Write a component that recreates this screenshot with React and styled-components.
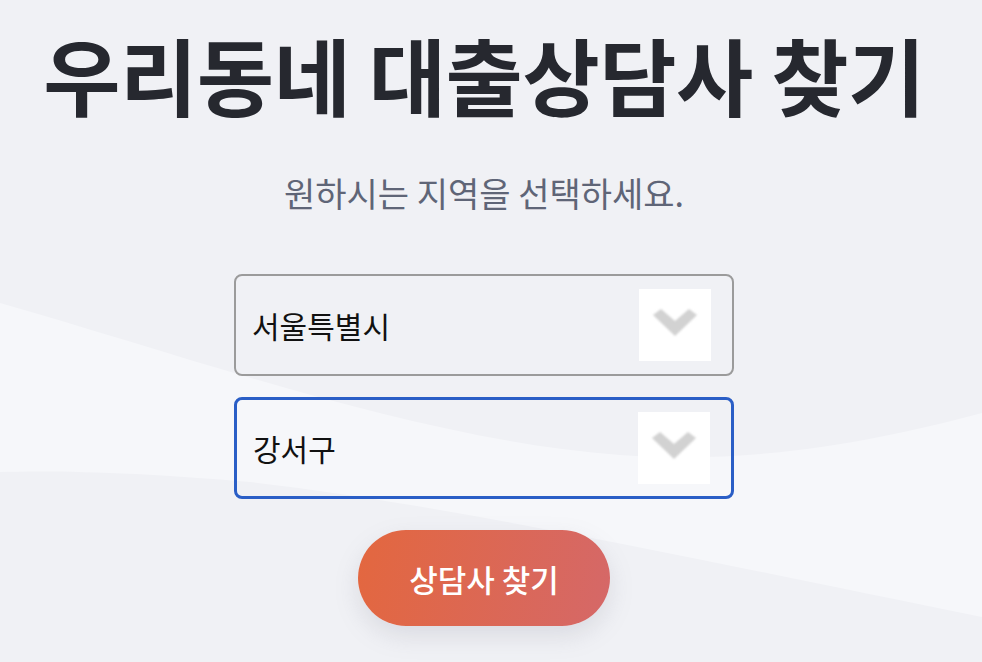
import React, { useState } from 'react';
import styled, { createGlobalStyle } from 'styled-components';

const GlobalStyle = createGlobalStyle`
  html, body {
    margin: 0;
    padding: 0;
    background: #f0f1f5;
  }
  body {
    font-family: "Noto Sans CJK KR", "Noto Sans", sans-serif;
  }
`;

const seoulGu = ['강남구', '강동구', '강북구', '강서구', '관악구', '광진구', '구로구', '금천구', '노원구', '도봉구'];

const Chevron = () => (
  <svg width="72" height="72" viewBox="0 0 72 72">
    <polygon
      points="14,26 22,20 36,32 50,20 58,26 36,47"
      fill="#d2d2d2"
      style={{ filter: 'blur(1.3px)' }}
    />
  </svg>
);

const Background = () => (
  <Waves viewBox="0 0 982 662" preserveAspectRatio="none">
    <path
      d="M0,303 C200,360 420,440 620,455 C760,465 880,440 982,413 L982,617 C700,560 450,505 250,482 C150,473 60,470 0,472 Z"
      fill="#f6f7fa"
    />
  </Waves>
);

const App = () => {
  const [city, setCity] = useState('서울특별시');
  const [gu, setGu] = useState('강서구');

  return (
    <>
      <GlobalStyle />
      <Page>
        <Background />
        <Content>
          <Titulo>우리동네 대출상담사 찾기</Titulo>
          <Subtitulo>원하시는 지역을 선택하세요.</Subtitulo>
          <Form>
            <SelectBox>
              <Select value={city} onChange={(e) => setCity(e.target.value)}>
                <option>서울특별시</option>
                <option>부산광역시</option>
                <option>경기도</option>
              </Select>
              <ArrowBox>
                <Chevron />
              </ArrowBox>
            </SelectBox>
            <SelectBox active>
              <Select value={gu} onChange={(e) => setGu(e.target.value)}>
                {seoulGu.map((g) => (
                  <option key={g}>{g}</option>
                ))}
              </Select>
              <ArrowBox>
                <Chevron />
              </ArrowBox>
            </SelectBox>
            <Boton type="button">상담사 찾기</Boton>
          </Form>
        </Content>
      </Page>
    </>
  );
};

export default App;

const Page = styled.div`
  position: relative;
  width: 100%;
  min-height: 662px;
  overflow: hidden;
  background: #f0f1f5;
`;

const Waves = styled.svg`
  position: absolute;
  top: 0;
  left: 0;
  width: 100%;
  height: 662px;
  z-index: 0;
`;

const Content = styled.div`
  position: relative;
  z-index: 1;
  display: flex;
  flex-direction: column;
  align-items: center;
  padding: 19px 14px 0 0;
`;

const Titulo = styled.h1`
  margin: 0;
  font-size: 84px;
  font-weight: 700;
  line-height: 110px;
  color: #26282f;
  letter-spacing: -0.5px;
  white-space: nowrap;
  text-align: center;
`;

const Subtitulo = styled.p`
  margin: 44px 0 0;
  font-size: 34px;
  font-weight: 400;
  line-height: 40px;
  color: #5f6577;
  text-align: center;
`;

const Form = styled.div`
  display: flex;
  flex-direction: column;
  align-items: center;
  gap: 21px;
  margin-top: 61px;
`;

const SelectBox = styled.div`
  box-sizing: border-box;
  width: 500px;
  height: 102px;
  display: flex;
  align-items: center;
  padding: 0 21px 0 16px;
  border: ${(p) => (p.active ? '3px solid #2a5ec6' : '2px solid #9b9b9b')};
  border-radius: 8px;
  background: transparent;
`;

const Select = styled.select`
  flex: 1;
  appearance: none;
  -webkit-appearance: none;
  border: none;
  outline: none;
  background: transparent;
  font-family: "Noto Sans CJK KR", "Noto Sans", sans-serif;
  font-size: 30px;
  color: #111111;
  padding: 0;
  margin: 0;
`;

const ArrowBox = styled.div`
  width: 72px;
  height: 72px;
  background: #ffffff;
  display: flex;
  align-items: center;
  justify-content: center;
  flex-shrink: 0;
`;

const Boton = styled.button`
  margin-top: 10px;
  width: 252px;
  height: 96px;
  border: none;
  border-radius: 48px;
  background: linear-gradient(100deg, #e3673f 0%, #d56868 100%);
  box-shadow: 0 10px 24px rgba(120, 120, 140, 0.18);
  color: #ffffff;
  font-family: "Noto Sans CJK KR", "Noto Sans", sans-serif;
  font-size: 31px;
  font-weight: 500;
  cursor: pointer;
`;
